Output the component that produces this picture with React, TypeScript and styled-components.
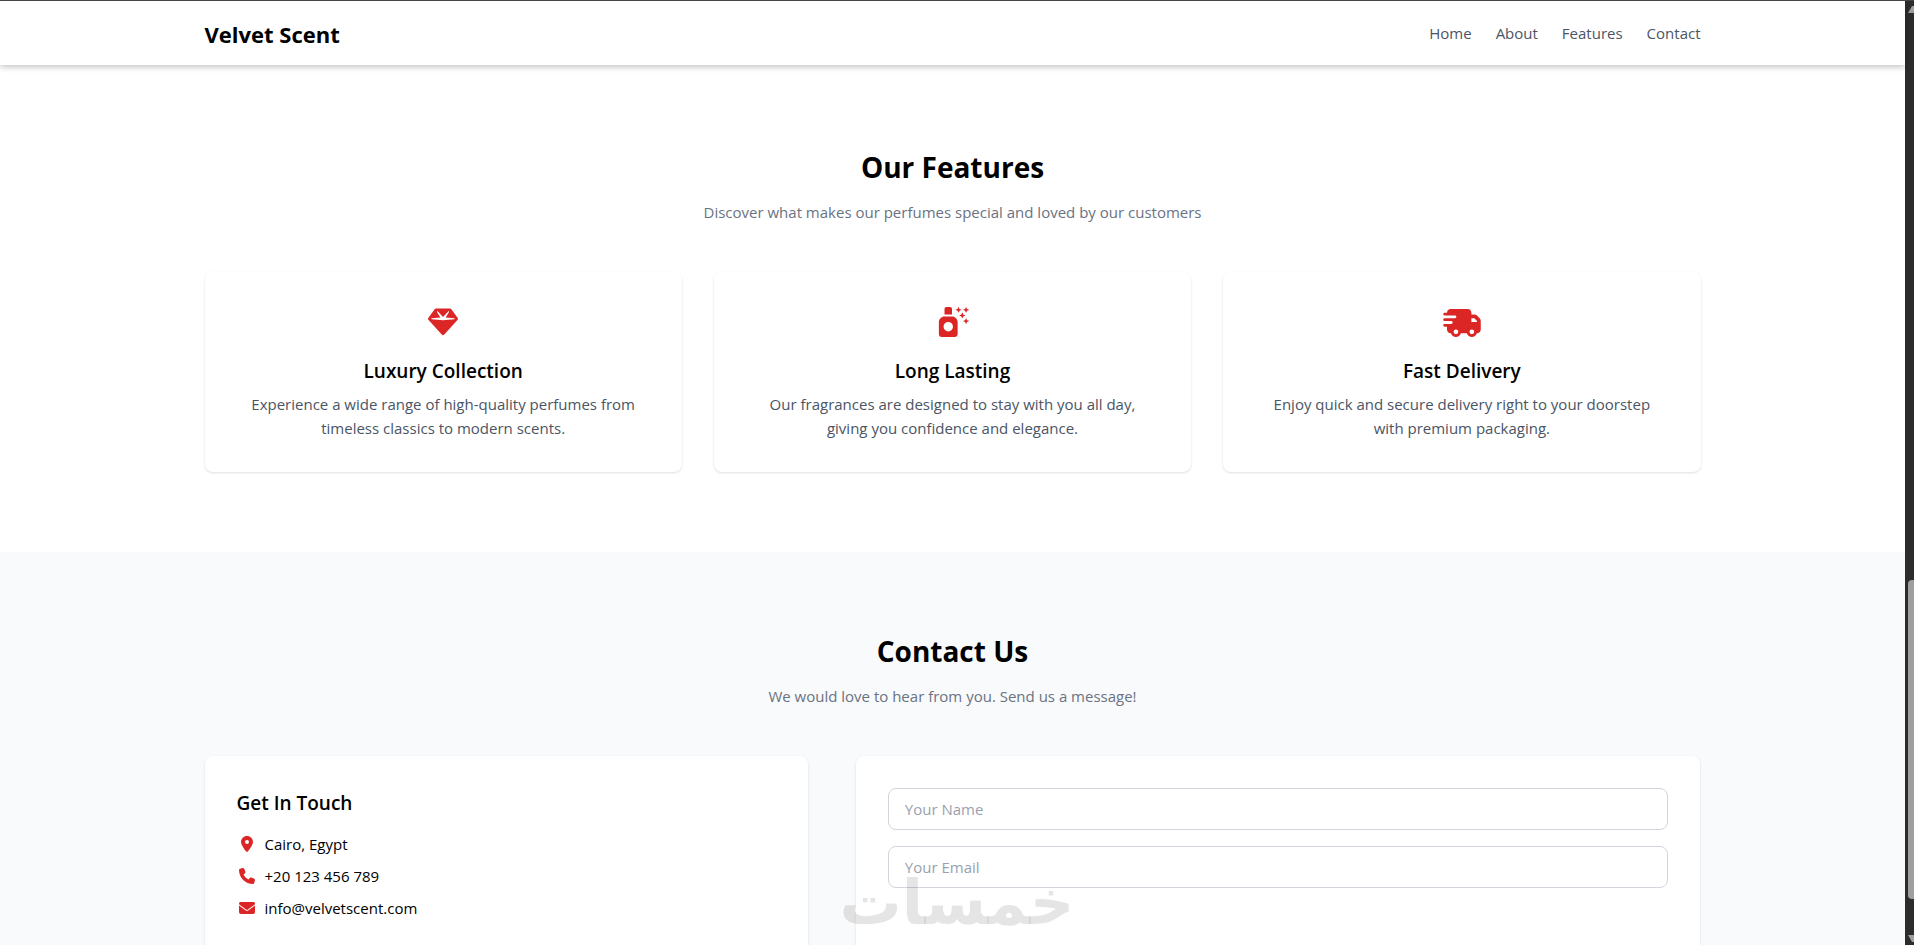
import React from "react";
import styled, { createGlobalStyle } from "styled-components";
import {
  FaEnvelope,
  FaGem,
  FaLocationDot,
  FaPhone,
  FaSprayCanSparkles,
} from "react-icons/fa6";

const GlobalStyle = createGlobalStyle`
  *, *::before, *::after { box-sizing: border-box; }
  body {
    margin: 0;
    background: #fff;
    color: #000;
    font-family: "Segoe UI", "Open Sans", "Noto Sans", sans-serif;
    font-size: 15px;
    line-height: 24px;
  }
  h1, h2, h3, p, ul { margin: 0; padding: 0; }
  ul { list-style: none; }
`;

const Shell = styled.div`
  position: relative;
  display: flex;
  height: 100vh;
  overflow: hidden;
  border-top: 1px solid #434645;
`;

const Page = styled.div`
  flex: 1;
  min-width: 0;
  display: flex;
  flex-direction: column;
`;

const Container = styled.div`
  width: 100%;
  max-width: 1536px;
  margin: 0 auto;
  padding: 0 20px;
`;

const Header = styled.header`
  position: relative;
  z-index: 1;
  background: #fff;
  box-shadow: 0 2px 6px rgba(0, 0, 0, 0.24);
`;

const HeaderRow = styled(Container)`
  display: flex;
  align-items: center;
  justify-content: space-between;
  height: 64px;
`;

const Brand = styled.h1`
  padding-top: 2px;
  font-size: 22px;
  line-height: 32px;
  font-weight: 700;
`;

const Nav = styled.nav`
  display: flex;
  gap: 24px;
`;

const NavLink = styled.a`
  color: #4a5565;
  text-decoration: none;
`;

const Main = styled.main`
  flex: 1;
  display: flex;
  flex-direction: column;
  padding-top: 3px;
`;

const Section = styled.section<{ $tinted?: boolean; $fill?: boolean }>`
  flex: ${(p) => (p.$fill ? "1 0 auto" : "none")};
  padding: 80px 0;
  background: ${(p) => (p.$tinted ? "#f9fafb" : "#fff")};
`;

const SectionHead = styled.div`
  margin-bottom: 48px;
  text-align: center;
`;

const SectionTitle = styled.h2`
  margin-bottom: 14px;
  font-size: 28px;
  line-height: 38px;
  font-weight: 700;
`;

const SectionText = styled.p`
  color: #6a7282;
`;

const FeatureGrid = styled.div`
  display: grid;
  grid-template-columns: repeat(3, 1fr);
  gap: 32px;
`;

const Card = styled.article`
  padding: 32px;
  border-radius: 8px;
  background: #fff;
  box-shadow: 0 1px 3px rgba(0, 0, 0, 0.1), 0 1px 2px -1px rgba(0, 0, 0, 0.1);
`;

const FeatureCard = styled(Card)`
  text-align: center;
`;

const FeatureIcon = styled.div<{ $width: number }>`
  display: flex;
  align-items: center;
  justify-content: center;
  height: 36px;
  margin-bottom: 16px;
  color: #dc2626;

  svg {
    width: ${(p) => p.$width}px;
    height: 30px;
  }
`;

const CardTitle = styled.h3<{ $gap: number }>`
  margin-bottom: ${(p) => p.$gap}px;
  font-size: 19px;
  line-height: 30px;
  font-weight: 600;
`;

const FeatureText = styled.p`
  padding: 0 8px;
  color: #4a5565;
`;

const ContactGrid = styled.div`
  display: grid;
  grid-template-columns: 5fr 7fr;
  gap: 48px;
`;

const ContactList = styled.ul`
  display: grid;
  gap: 8px;
`;

const ContactItem = styled.li`
  display: flex;
  align-items: center;
  gap: 8px;

  svg {
    width: 20px;
    height: 16px;
    color: #dc2626;
  }
`;

const FormCard = styled(Card)`
  min-height: 320px;
`;

const Form = styled.form`
  display: grid;
  gap: 16px;
`;

const Field = styled.input`
  width: 100%;
  height: 42px;
  padding: 8px 16px;
  border: 1px solid #d1d5dc;
  border-radius: 8px;
  background: #fff;
  font: inherit;

  &::placeholder {
    color: #99a1af;
    opacity: 1;
  }
`;

const Watermark = styled.div`
  position: absolute;
  bottom: 0;
  left: 50%;
  z-index: 2;
  transform: translateX(-50%);
  color: rgba(0, 0, 0, 0.1);
  font-family: "DejaVu Sans", sans-serif;
  font-size: 62px;
  line-height: 84px;
  font-weight: 700;
  pointer-events: none;
`;

const ScrollTrack = styled.div`
  display: grid;
  grid-template-rows: 18px 561fr 319fr 28fr 18px;
  width: 9px;
  padding-left: 3px;
  overflow: hidden;
  background: #2c2c2c;
`;

const ScrollThumb = styled.div`
  grid-row: 3;
  border-radius: 4px 0 0 4px;
  background: #9f9f9f;
`;

const ScrollArrow = styled.svg<{ $row: number }>`
  grid-row: ${(p) => p.$row};
  width: 11px;
  height: 18px;
  fill: #9f9f9f;
`;

function TruckIcon({ viewBox }: { viewBox: string }) {
  return (
    <svg viewBox={viewBox} fill="currentColor" aria-hidden>
      <path
        fillRule="evenodd"
        d="M64 96c0-35.300 28.700-64 64-64l288 0c35.300 0 64 28.700 64 64l0 32 50.700 0c17 0 33.300 6.700 45.300 18.700L621.300 192c12 12 18.700 28.300 18.700 45.300L640 384c0 35.300-28.700 64-64 64l-3.300 0c-10.400 36.900-44.400 64-84.700 64s-74.200-27.100-84.700-64l-102.600 0c-10.400 36.900-44.400 64-84.700 64s-74.200-27.100-84.700-64l-3.300 0c-35.300 0-64-28.700-64-64l0-48-40 0c-13.300 0-24-10.700-24-24s10.700-24 24-24l112 0c13.300 0 24-10.700 24-24s-10.700-24-24-24L24 240c-13.300 0-24-10.700-24-24s10.700-24 24-24l176 0c13.300 0 24-10.700 24-24s-10.700-24-24-24L24 144c-13.300 0-24-10.700-24-24S10.700 96 24 96l40 0zM576 256l0-18.700-45.300-45.300-50.700 0 0 64 96 0zM256 424a40 40 0 1 0-80 0 40 40 0 1 0 80 0zM488 464a40 40 0 1 0 0-80 40 40 0 1 0 0 80z"
      />
    </svg>
  );
}

const links = ["Home", "About", "Features", "Contact"];

const features = [
  {
    icon: FaGem,
    width: 30,
    viewBox: "0 0 512 512",
    title: "Luxury Collection",
    text: "Experience a wide range of high-quality perfumes from timeless classics to modern scents.",
  },
  {
    icon: FaSprayCanSparkles,
    width: 34,
    viewBox: "-64 0 576 512",
    title: "Long Lasting",
    text: "Our fragrances are designed to stay with you all day, giving you confidence and elegance.",
  },
  {
    icon: TruckIcon,
    width: 38,
    viewBox: "0 0 640 512",
    title: "Fast Delivery",
    text: "Enjoy quick and secure delivery right to your doorstep with premium packaging.",
  },
];

const contacts = [
  { icon: FaLocationDot, text: "Cairo, Egypt" },
  { icon: FaPhone, text: "+20 123 456 789" },
  { icon: FaEnvelope, text: "info@velvetscent.com" },
];

export default function App() {
  return (
    <Shell>
      <GlobalStyle />
      <Page>
        <Header>
          <HeaderRow>
            <Brand>Velvet Scent</Brand>
            <Nav>
              {links.map((link) => (
                <NavLink key={link} href={`#${link.toLowerCase()}`}>
                  {link}
                </NavLink>
              ))}
            </Nav>
          </HeaderRow>
        </Header>
        <Main>
          <Section id="features">
            <Container>
              <SectionHead>
                <SectionTitle>Our Features</SectionTitle>
                <SectionText>
                  Discover what makes our perfumes special and loved by our customers
                </SectionText>
              </SectionHead>
              <FeatureGrid>
                {features.map(({ icon: Icon, width, viewBox, title, text }) => (
                  <FeatureCard key={title}>
                    <FeatureIcon $width={width}>
                      <Icon viewBox={viewBox} />
                    </FeatureIcon>
                    <CardTitle $gap={6}>{title}</CardTitle>
                    <FeatureText>{text}</FeatureText>
                  </FeatureCard>
                ))}
              </FeatureGrid>
            </Container>
          </Section>
          <Section id="contact" $tinted $fill>
            <Container>
              <SectionHead>
                <SectionTitle>Contact Us</SectionTitle>
                <SectionText>We would love to hear from you. Send us a message!</SectionText>
              </SectionHead>
              <ContactGrid>
                <Card>
                  <CardTitle $gap={14}>Get In Touch</CardTitle>
                  <ContactList>
                    {contacts.map(({ icon: Icon, text }) => (
                      <ContactItem key={text}>
                        <Icon aria-hidden />
                        {text}
                      </ContactItem>
                    ))}
                  </ContactList>
                </Card>
                <FormCard>
                  <Form>
                    <Field type="text" name="name" placeholder="Your Name" aria-label="Your Name" />
                    <Field type="email" name="email" placeholder="Your Email" aria-label="Your Email" />
                  </Form>
                </FormCard>
              </ContactGrid>
            </Container>
          </Section>
        </Main>
      </Page>
      <ScrollTrack aria-hidden>
        <ScrollArrow $row={1} viewBox="0 0 11 18">
          <path d="M0 12 L4 5 H7 L11 12 Z" />
        </ScrollArrow>
        <ScrollThumb />
        <ScrollArrow $row={5} viewBox="0 0 11 18">
          <path d="M0 8 H11 L7 15 H4 Z" />
        </ScrollArrow>
      </ScrollTrack>
      <Watermark lang="ar" dir="rtl">خمسات</Watermark>
    </Shell>
  );
}
